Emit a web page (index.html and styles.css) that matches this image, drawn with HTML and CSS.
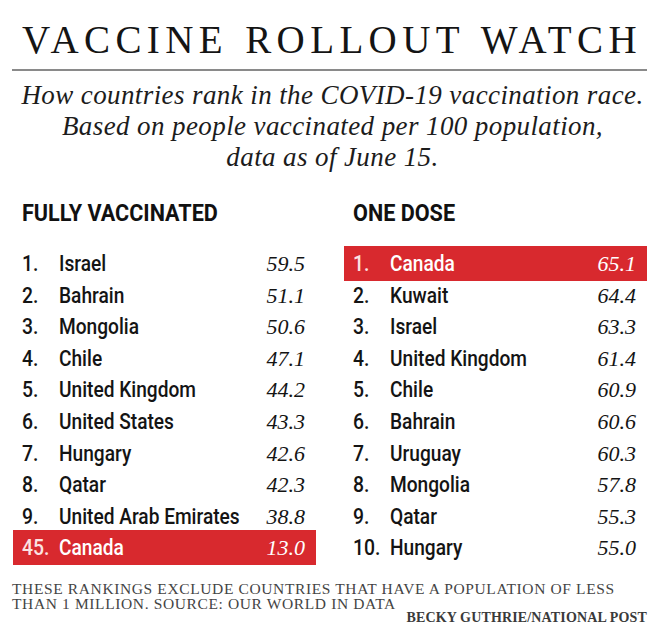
FILE: index.html
```html
<!DOCTYPE html>
<html lang="en">
<head>
<meta charset="utf-8">
<title>Vaccine Rollout Watch</title>
<link rel="stylesheet" href="styles.css">
</head>
<body>
<main class="page">
  <header class="masthead">
    <h1 class="title">VACCINE ROLLOUT WATCH</h1>
    <hr class="rule">
    <p class="deck">How countries rank in the COVID-19 vaccination race.<br>Based on people vaccinated per 100 population,<br>data as of June 15.</p>
  </header>

  <section class="tables">
    <div class="col">
      <h2 class="col-head"><span class="head-text">FULLY VACCINATED</span></h2>
      <ol class="rank">
        <li class="row"><span class="num">1.</span><span class="name">Israel</span><span class="val">59.5</span></li>
        <li class="row"><span class="num">2.</span><span class="name">Bahrain</span><span class="val">51.1</span></li>
        <li class="row"><span class="num">3.</span><span class="name">Mongolia</span><span class="val">50.6</span></li>
        <li class="row"><span class="num">4.</span><span class="name">Chile</span><span class="val">47.1</span></li>
        <li class="row"><span class="num">5.</span><span class="name">United Kingdom</span><span class="val">44.2</span></li>
        <li class="row"><span class="num">6.</span><span class="name">United States</span><span class="val">43.3</span></li>
        <li class="row"><span class="num">7.</span><span class="name">Hungary</span><span class="val">42.6</span></li>
        <li class="row"><span class="num">8.</span><span class="name">Qatar</span><span class="val">42.3</span></li>
        <li class="row"><span class="num">9.</span><span class="name">United Arab Emirates</span><span class="val">38.8</span></li>
        <li class="row row-hl"><span class="num">45.</span><span class="name">Canada</span><span class="val">13.0</span></li>
      </ol>
    </div>
    <div class="col">
      <h2 class="col-head"><span class="head-text">ONE DOSE</span></h2>
      <ol class="rank">
        <li class="row row-hl"><span class="num">1.</span><span class="name">Canada</span><span class="val">65.1</span></li>
        <li class="row"><span class="num">2.</span><span class="name">Kuwait</span><span class="val">64.4</span></li>
        <li class="row"><span class="num">3.</span><span class="name">Israel</span><span class="val">63.3</span></li>
        <li class="row"><span class="num">4.</span><span class="name">United Kingdom</span><span class="val">61.4</span></li>
        <li class="row"><span class="num">5.</span><span class="name">Chile</span><span class="val">60.9</span></li>
        <li class="row"><span class="num">6.</span><span class="name">Bahrain</span><span class="val">60.6</span></li>
        <li class="row"><span class="num">7.</span><span class="name">Uruguay</span><span class="val">60.3</span></li>
        <li class="row"><span class="num">8.</span><span class="name">Mongolia</span><span class="val">57.8</span></li>
        <li class="row"><span class="num">9.</span><span class="name">Qatar</span><span class="val">55.3</span></li>
        <li class="row"><span class="num">10.</span><span class="name">Hungary</span><span class="val">55.0</span></li>
      </ol>
    </div>
  </section>

  <footer class="foot">
    <p class="note">THESE RANKINGS EXCLUDE COUNTRIES THAT HAVE A POPULATION OF LESS<br>THAN 1 MILLION. SOURCE: OUR WORLD IN DATA</p>
    <p class="credit">BECKY GUTHRIE/NATIONAL POST</p>
  </footer>
</main>
</body>
</html>
```

FILE: styles.css
```css
* { box-sizing: border-box; }

html, body {
  margin: 0;
  padding: 0;
  background: #ffffff;
}

body {
  width: 656px;
  height: 634px;
  overflow: hidden;
  color: #161616;
}

.page {
  padding: 0 9px 0 12px;
}

.masthead {
  display: flex;
  flex-direction: column;
}

.title {
  margin: 0;
  padding-top: 18px;
  padding-left: 5px;
  font-family: "Liberation Serif", "Times New Roman", serif;
  font-weight: 400;
  font-size: 39px;
  line-height: 44px;
  letter-spacing: 5.4px;
  word-spacing: 2px;
  text-align: center;
  color: #141414;
}

.rule {
  margin: 7px 0 0 0;
  height: 2px;
  border: 0;
  background: #8a8a8a;
}

.deck {
  margin: 9px 0 0 0;
  padding-left: 6px;
  font-family: "Liberation Serif", "Times New Roman", serif;
  font-style: italic;
  font-size: 27px;
  line-height: 31px;
  letter-spacing: 0.4px;
  text-align: center;
  color: #1c1c1c;
}

.tables {
  display: grid;
  grid-template-columns: 303px 303px;
  column-gap: 28px;
  margin: 26px 0 0 1px;
}

.col-head {
  margin: 0 0 21px 9px;
  font-family: Roboto, "Liberation Sans", sans-serif;
  font-weight: 700;
  font-size: 24px;
  line-height: 28px;
  color: #111;
  white-space: nowrap;
}

.head-text {
  display: inline-block;
  transform: scaleX(0.9);
  transform-origin: left center;
}

.rank {
  list-style: none;
  margin: 0;
  padding: 0;
}

.row {
  display: flex;
  align-items: baseline;
  height: 31.6px;
  padding: 0 11px 0 9px;
  font-family: Roboto, "Liberation Sans", sans-serif;
  font-weight: 500;
  font-size: 21.5px;
  line-height: 31.6px;
  color: #141414;
}

.num {
  flex: 0 0 37px;
  display: inline-block;
  transform: scaleX(0.9);
  transform-origin: left center;
}

.name {
  flex: 1 1 auto;
  white-space: nowrap;
  display: inline-block;
  transform: scaleX(0.89);
  transform-origin: left center;
}

.val {
  font-family: "Liberation Serif", "Times New Roman", serif;
  font-style: italic;
  font-size: 22px;
}

.row-hl {
  background: #d8292e;
  color: #ffffff;
  box-shadow: 0 -2px 0 #d8292e, 0 1px 0 #d8292e;
}

.row-hl .num {
  color: #fbe3e3;
}

.foot {
  margin-top: 17px;
}

.note {
  margin: 0;
  font-family: "Liberation Serif", "Times New Roman", serif;
  font-size: 15.5px;
  line-height: 15px;
  letter-spacing: 0.62px;
  color: #444;
}

.credit {
  margin: 0;
  font-family: "Liberation Serif", "Times New Roman", serif;
  font-weight: 700;
  font-size: 14px;
  line-height: 14px;
  letter-spacing: 0.15px;
  text-align: right;
  color: #3a3a3a;
}
```
